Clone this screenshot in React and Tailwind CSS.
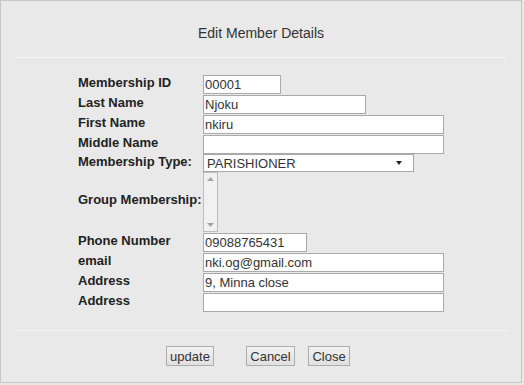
const font = { fontFamily: '"Liberation Sans", Arial, sans-serif' }

function Row({ label, children, className = '' }) {
  return (
    <div className={`flex items-start ${className}`}>
      <div className="w-[125px] shrink-0 text-[13px] leading-[15px] font-bold text-[#222]">{label}</div>
      {children}
    </div>
  )
}

function Field({ value = '', w }) {
  return (
    <input
      type="text"
      defaultValue={value}
      className={`${w} h-[19px] border border-[#a9a9a9] bg-white px-[1px] text-[13px] leading-[15px] text-[#333] outline-none`}
      style={font}
    />
  )
}

function Tri({ up }) {
  return (
    <svg width="7" height="4" viewBox="0 0 7 4" className="fill-[#a3a3a3]">
      {up ? <path d="M0 4 L3.5 0 L7 4 Z" /> : <path d="M0 0 L7 0 L3.5 4 Z" />}
    </svg>
  )
}

export default function App() {
  return (
    <div className="w-[524px] h-[385px] bg-[#e9e9e9]" style={font}>
      <div className="w-[522px] h-[383px] border border-[#c6c6c6] bg-[#e9e9e9] flex flex-col">
        <h1 className="pt-[24px] text-center text-[14px] leading-[16px] text-[#333]">Edit Member Details</h1>
        <div className="mt-[16px] mx-[14px] h-px bg-[#f5f5f5]" />

        <div className="mt-[17px] pl-[77px] flex flex-col gap-[1px]">
          <Row label="Membership ID"><Field value="00001" w="w-[78px]" /></Row>
          <Row label="Last Name"><Field value="Njoku" w="w-[163px]" /></Row>
          <Row label="First Name"><Field value="nkiru" w="w-[241px]" /></Row>
          <Row label="Middle Name"><Field w="w-[241px]" /></Row>
          <Row label="Membership Type:" className="-mt-[1px]">
            <div className="w-[211px] h-[18px] border border-[#a9a9a9] bg-white flex items-center justify-between pl-[3px] pr-[11px] text-[13px] leading-[15px] text-[#333]">
              <span>PARISHIONER</span>
              <svg width="6" height="4" viewBox="0 0 6 4" className="fill-[#222]"><path d="M0 0 L6 0 L3 4 Z" /></svg>
            </div>
          </Row>
          <div className="flex items-center -mt-[1px]">
            <div className="w-[125px] shrink-0 mb-[5px] text-[13px] leading-[15px] font-bold text-[#222]">Group Membership:</div>
            <div className="w-[15px] h-[60px] border border-[#bdbdbd] bg-[#f1f1f1] flex flex-col items-center justify-between py-[4px]">
              <Tri up />
              <Tri />
            </div>
          </div>
          <Row label="Phone Number"><Field value="09088765431" w="w-[104px]" /></Row>
          <Row label="email"><Field value="nki.og@gmail.com" w="w-[241px]" /></Row>
          <Row label="Address"><Field value="9, Minna close" w="w-[241px]" /></Row>
          <Row label="Address"><Field w="w-[241px]" /></Row>
        </div>

        <div className="mt-[18px] mx-[14px] h-px bg-[#f5f5f5]" />

        <div className="mt-[15px] flex pl-[165px] text-[13px] leading-[15px] text-[#333]">
          <button className="w-[48px] h-[20px] border border-[#adadad] bg-gradient-to-b from-[#f2f2f2] to-[#e0e0e0]">update</button>
          <button className="ml-[32px] w-[49px] h-[20px] border border-[#adadad] bg-gradient-to-b from-[#f2f2f2] to-[#e0e0e0]">Cancel</button>
          <button className="ml-[13px] w-[42px] h-[20px] border border-[#adadad] bg-gradient-to-b from-[#f2f2f2] to-[#e0e0e0]">Close</button>
        </div>
      </div>
    </div>
  )
}
